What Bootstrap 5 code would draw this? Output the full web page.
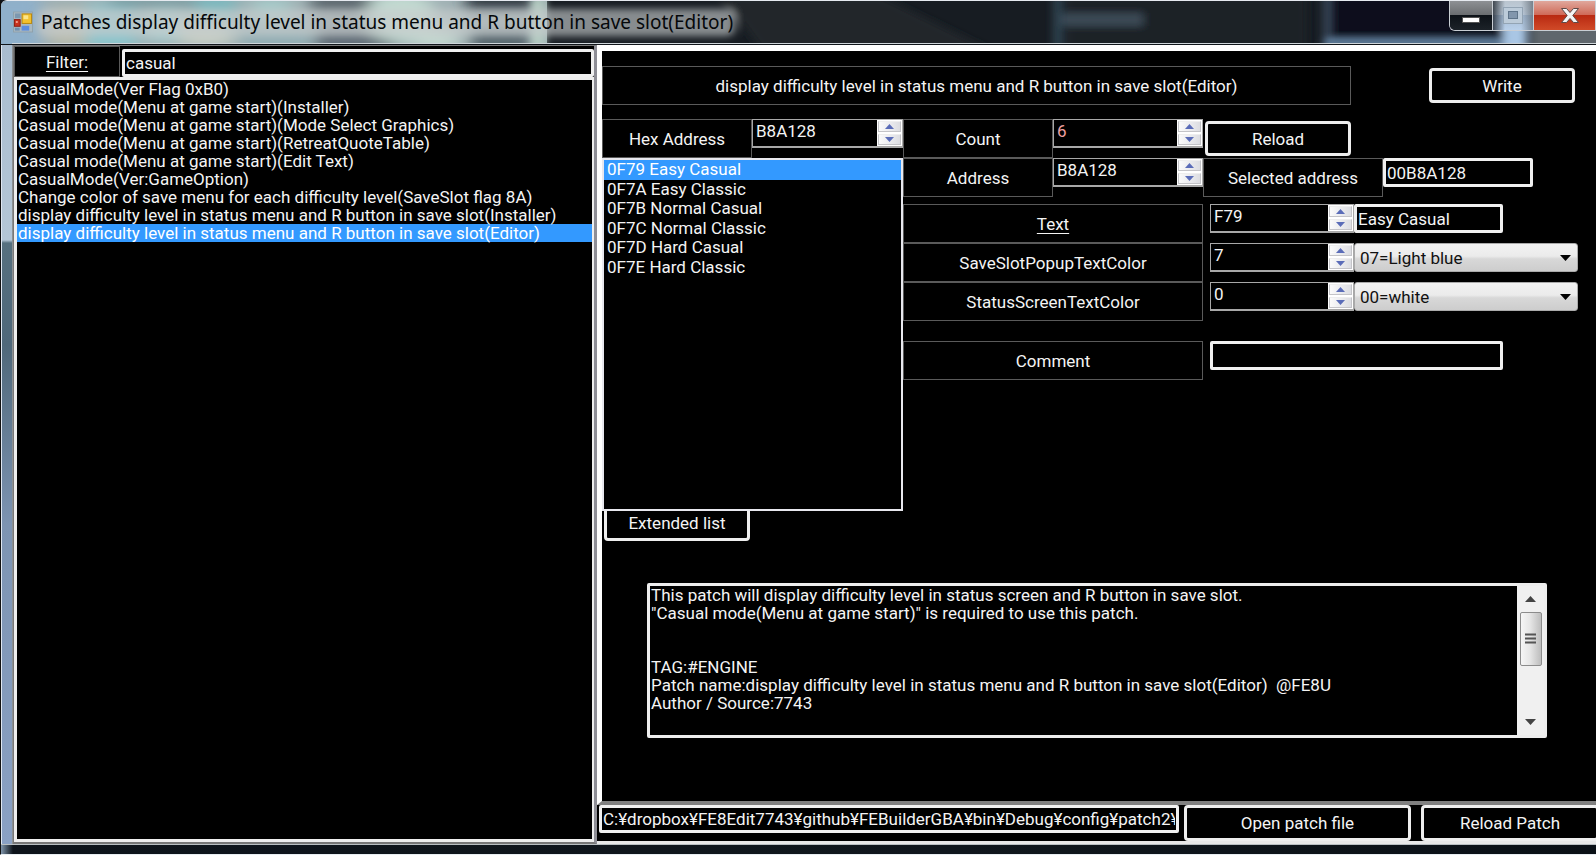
<!DOCTYPE html>
<html lang="en">
<head>
<meta charset="utf-8">
<meta name="viewport" content="width=device-width, initial-scale=1">
<title>Patches display difficulty level in status menu and R button in save slot(Editor)</title>
<link href="https://cdn.jsdelivr.net/npm/bootstrap@5.3.0/dist/css/bootstrap.min.css" rel="stylesheet">
<style>
  :root { --ui: Roboto, "Noto Sans CJK JP", sans-serif; --edge: #5a5a5a; --hl: #3399ff; }
  body { font-family: var(--ui); font-size: 17px; line-height: 18px; color: #f4f4f4; background: #11161c; }
  .win { min-height: 100vh; background: #0c1218; border-left: 1px solid #111; border-bottom: 1px solid #e8eef2; }
  .glass-left { width: 11px; background: linear-gradient(90deg, #dfe7f2 0 1px, transparent 1px), linear-gradient(180deg, #a9bdd0 0, #b4c6d6 195px, #56707f 198px, #4f687a 300px, #7d94b2 480px, #8aa1c4 100%); }
  .flow-min { min-width: 0; }

  /* Glass title bar */
  .titlebar { height: 45px; position: relative; border-top: 1px solid #e6eaf0; border-bottom: 1px solid #10151a; border-top-left-radius: 6px; background: #171c23; }
  .titlebar .backdrop { position: absolute; inset: 0; width: 100%; height: 100%; }
  .titlebar .caption { font-family: "Noto Sans", sans-serif; font-size: 19px; line-height: 26px; color: #05080a; }
  .titlebar::after { content: ""; position: absolute; left: 11px; right: 0; bottom: 0; height: 1px; background: #cfd6da; }
  .sysbtns { position: relative; height: 30px; border: 1px solid #c9ced4; border-top: 0; border-right: 0; border-bottom-left-radius: 6px; overflow: hidden; }
  .sysbtns button { border: 0; padding: 0; height: 29px; border-right: 1px solid #c9ced4; background: linear-gradient(#8d9094 0, #6a6d70 48%, #0d1218 50%, #1c2228 100%); }
  .sysbtns .b-min { width: 43px; }
  .sysbtns .b-max { width: 41px; background: linear-gradient(90deg, rgba(20,26,34,.75) 0, rgba(20,26,34,0) 30%, rgba(20,26,34,0) 70%, rgba(90,100,110,.7) 100%), linear-gradient(#b9c4ce 0, #c3d2e2 48%, #a5bbd4 50%, #b9d0ea 100%); }
  .sysbtns .b-close { width: 62px; padding-left: 10px; background: linear-gradient(#e0a79c 0, #cf6a58 48%, #b92a12 50%, #d04a28 100%); }

  /* Shared controls */
  .client { background: #000; border-left: 1px solid #8b8f92; }
  .cell { border: 1px solid var(--edge); display: flex; align-items: center; justify-content: center; height: 39px; white-space: nowrap; }
  .cell a { color: inherit; text-decoration: underline; text-underline-offset: 3px; }
  .w150 { flex: 0 0 150px; }
  .btn-w { font: inherit; background: #000; color: inherit; border: 3px solid #eee; border-radius: 4px; padding: 0; height: 35px; }
  .txt { font: inherit; background: #000; color: inherit; border: 3px solid #f0f0f0; border-radius: 2px; padding: 0 1px; height: 29px; min-width: 0; }
  .spin { display: flex; min-width: 0; height: 29px; border: 1px solid #a8a8a8; border-bottom-width: 2px; background: #000; }
  .spin input { flex: 1 1 0; width: 0; min-width: 0; border: 0; background: transparent; color: inherit; font: inherit; padding: 0 0 4px 3px; outline: 0; }
  .spin input.pink { color: #f0a0a0; }
  .spin .steps { flex: 0 0 25px; background: #fff; display: flex; flex-direction: column; gap: 2px; padding: 1px; }
  .spin .steps button { flex: 1; border: 1px solid #c4c4c8; border-top-color: #eee; background: linear-gradient(90deg, #fbfbfb, #dcdde2); padding: 0; line-height: 0; display: flex; align-items: center; justify-content: center; }
  .combo { font: inherit; color: #111; border: 1px solid #aaa; border-radius: 3px; height: 29px; padding: 0 5px; appearance: none; width: 224px;
    background: url("data:image/svg+xml,%3Csvg xmlns='http://www.w3.org/2000/svg' width='12' height='6'%3E%3Cpath d='M0 0h11L5.5 6z'/%3E%3C/svg%3E") no-repeat right 5px center, linear-gradient(#f2f2f2, #ebebeb 45%, #d8d8d8 55%, #cdcdcd); }

  /* Left pane */
  .left-pane { flex: 0 0 584px; border: solid #777; border-width: 1px 3px 2px 1px; border-right-color: #8e8e96; }
  .filter-label { width: 106px; height: 31px; }
  .filter-row .txt { height: 28px; margin-left: 2px; }
  .results { border: 3px solid #eee; border-right-width: 2px; margin: 0; }
  .results li { padding-left: 1px; height: 18px; white-space: nowrap; }
  .results li.on, .entries li.on { background: var(--hl); color: #fff; }

  /* Right pane */
  .right-pane { border-left: 5px solid #fff; border-top: 6px solid #fff; border-bottom: 4px solid #808080; min-width: 0; }
  .top-row { padding: 15px 16px 0 0; }
  .write { width: 146px; margin-left: 78px; margin-right: 5px; }
  .editor { margin-top: 14px; }
  .listcol { flex: 0 0 301px; min-width: 0; }
  .entries-box { height: 353px; border: 2px solid #e8e8ee; position: relative; z-index: 1; background: #000; }
  .entries { height: 117px; display: flex; flex-direction: column; }
  .entries li { flex: 1; padding-left: 3px; }
  .ext { width: 146px; height: 36px; margin: -6px 0 0 2px; }
  .reload { width: 146px; margin: 2px 0 2px 2px; }
  .sel-label { width: 180px; }
  .sel-box { width: 150px; }
  .fields { margin-top: 7px; }
  .flab { flex: 0 0 300px; }
  .fields .spin { width: 144px; margin-left: 7px; }
  .preview { width: 149px; }
  .comment { margin-top: 20px; }
  .comment .txt { width: 293px; margin-left: 7px; }

  .memo { height: 155px; border: 3px solid #eee; border-radius: 2px; margin: 42px 49px 0 45px; }
  .memo textarea { font: inherit; color: inherit; background: #000; border: 0; padding: 0 1px; resize: none; overflow: hidden; outline: 0; }
  .vscroll { width: 27px; background: #f0f0f0; }
  .vscroll button { border: 0; background: transparent; padding: 0; height: 26px; line-height: 0; }
  .vscroll .thumb { height: 54px; width: 22px; border: 1px solid #8c8c8c; border-radius: 2px; background: linear-gradient(90deg, #f6f6f6, #e6e6e6 45%, #bdbdbd); display: flex; align-items: center; justify-content: center; }

  /* Footer */
  .footbar { height: 39px; border-bottom: 3px solid #e8e8e8; }
  .footbar .btn-w { height: 36px; }
  .footbar .path { margin-left: 2px; height: 28px; }
  .openf { width: 227px; margin-left: 5px; }
  .reloadp { width: 178px; margin-left: 10px; margin-right: -3px; }
  .frame-bottom { height: 10px; border-top: 1px solid #b9bfc2; background: linear-gradient(90deg, #7f95ab 0, #0d131a 12px, #10171d 60%, #0a1016 100%); }
</style>
</head>
<body>
<div class="win d-flex flex-column overflow-hidden">
  <header class="titlebar d-flex justify-content-between align-items-start overflow-hidden">
    <svg class="backdrop" preserveAspectRatio="none" viewBox="0 0 1595 44" aria-hidden="true">
      <defs>
        <filter id="soft" x="-20%" y="-50%" width="140%" height="200%"><feGaussianBlur stdDeviation="8"/></filter>
        <filter id="fine" x="-20%" y="-50%" width="140%" height="200%"><feGaussianBlur stdDeviation="4"/></filter>
      </defs>
      <rect width="546" height="44" fill="#9fb0b3"/>
      <g filter="url(#soft)">
        <rect x="-20" y="-10" width="60" height="70" fill="#8fb0cb"/>
        <ellipse cx="70" cy="30" rx="26" ry="20" fill="#b9bcae"/>
        <rect x="85" y="4" width="50" height="50" fill="#8cc4cc"/>
        <rect x="110" y="-6" width="100" height="14" fill="#74969c"/>
        <ellipse cx="165" cy="26" rx="26" ry="14" fill="#a8d3d4"/>
        <rect x="195" y="-8" width="40" height="40" fill="#7cb8be"/>
        <ellipse cx="205" cy="34" rx="30" ry="14" fill="#c9d0c6"/>
        <rect x="240" y="24" width="70" height="26" fill="#92aeb4"/>
        <ellipse cx="270" cy="8" rx="22" ry="12" fill="#a6cccb"/>
        <rect x="310" y="-10" width="60" height="24" fill="#59636a"/>
        <rect x="315" y="26" width="80" height="30" fill="#5e6a74"/>
        <ellipse cx="400" cy="16" rx="35" ry="26" fill="#c3dbd2"/>
        <rect x="465" y="-14" width="70" height="24" fill="#29333b"/>
        <ellipse cx="435" cy="38" rx="26" ry="14" fill="#c4d8d0"/>
        <rect x="470" y="30" width="60" height="22" fill="#4c5a62"/>
      </g>
      <rect x="546" width="1050" height="44" fill="#171c22"/>
      <g filter="url(#fine)">
        <rect x="530" y="-4" width="14" height="54" fill="#b5cdc3"/>
        <path d="M720-5h160l110 55H760z" fill="#20262c"/>
        <path d="M1052-5h10v55h-10z" fill="#2e4250"/>
        <rect x="1066" y="-6" width="240" height="56" fill="#1a2028"/>
        <rect x="1062" y="12" width="80" height="14" fill="#3a4a55"/>
        <rect x="1322" y="-6" width="180" height="44" fill="#08101c"/>
        <rect x="1322" y="-6" width="8" height="60" fill="#38475a"/>
        <rect x="1324" y="39" width="190" height="8" fill="#6b8cad"/>
        <rect x="1502" y="-6" width="24" height="60" fill="#a9c6e4"/>
        <rect x="1530" y="-6" width="80" height="60" fill="#5f666c"/>
        <rect x="36" y="8" width="698" height="28" rx="8" fill="#c6cccd" fill-opacity=".64"/>
      </g>
    </svg>
    <div class="d-flex align-items-center gap-2 ps-2 ms-1 pt-2 position-relative">
      <svg width="20" height="22" viewBox="0 0 21 22" aria-hidden="true">
        <rect x=".5" y=".5" width="20" height="21" fill="#a9b9c2" stroke="#8fa1ab"/>
        <rect x="2" y="2" width="6" height="5" fill="#7c98b0"/>
        <rect x="9.5" y="2.5" width="10" height="10" fill="#f2c12e" stroke="#b8860b"/>
        <rect x="11" y="4" width="5" height="4" fill="#fbe58a"/>
        <rect x="1.5" y="8.5" width="6" height="7" fill="#c8321e" stroke="#8d1a10"/>
        <rect x="3" y="10" width="2" height="2" fill="#f0a090"/>
        <rect x="9" y="15" width="8" height="5" fill="#5b8de0"/>
        <rect x="2" y="17" width="5" height="3" fill="#6f8fb0"/>
      </svg>
      <span class="caption text-nowrap">Patches display difficulty level in status menu and R button in save slot(Editor)</span>
    </div>
    <div class="sysbtns d-flex flex-shrink-0">
      <button class="b-min" type="button" aria-label="Minimize"><svg width="18" height="20" viewBox="0 0 18 20"><rect x=".5" y="11.5" width="17" height="5" fill="#fff" stroke="#555"/></svg></button>
      <button class="b-max" type="button" aria-label="Maximize"><svg width="20" height="18" viewBox="0 0 20 18"><rect x=".5" y=".5" width="19" height="16" fill="#bccbd9" stroke="#93a4b4"/><rect x="5.5" y="4.5" width="9" height="7" fill="#8296ac" stroke="#5f7489"/></svg></button>
      <button class="b-close" type="button" aria-label="Close"><svg width="20" height="18" viewBox="0 0 20 18"><path d="M1.5 1.500h5L10 5.500l3.500-4h5L12.800 8.500l5.700 7h-5L10 11.500l-3.500 4h-5l5.700-7z" fill="#f4f4f4" stroke="#5e4a48"/></svg></button>
    </div>
  </header>

  <div class="d-flex flex-grow-1">
    <div class="glass-left flex-shrink-0"></div>
    <main class="client d-flex flex-grow-1 flow-min">
      <section class="left-pane d-flex flex-column">
        <div class="filter-row d-flex align-items-end">
          <div class="cell filter-label"><a href="#filter">Filter:</a></div>
          <input id="filter" class="txt flex-grow-1" value="casual" aria-label="Filter">
        </div>
        <ul class="results list-unstyled flex-grow-1">
          <li>CasualMode(Ver Flag 0xB0)</li>
          <li>Casual mode(Menu at game start)(Installer)</li>
          <li>Casual mode(Menu at game start)(Mode Select Graphics)</li>
          <li>Casual mode(Menu at game start)(RetreatQuoteTable)</li>
          <li>Casual mode(Menu at game start)(Edit Text)</li>
          <li>CasualMode(Ver:GameOption)</li>
          <li>Change color of save menu for each difficulty level(SaveSlot flag 8A)</li>
          <li>display difficulty level in status menu and R button in save slot(Installer)</li>
          <li class="on">display difficulty level in status menu and R button in save slot(Editor)</li>
        </ul>
      </section>

      <div class="d-flex flex-column flex-grow-1 flow-min">
        <section class="right-pane flex-grow-1">
          <div class="top-row d-flex align-items-center">
            <div class="cell flex-grow-1">display difficulty level in status menu and R button in save slot(Editor)</div>
            <button class="btn-w write" type="button">Write</button>
          </div>
          <div class="d-flex editor">
            <div class="listcol">
              <div class="d-flex">
                <label class="cell w150" for="hex">Hex Address</label>
                <div class="spin flex-grow-1"><input id="hex" value="B8A128"><span class="steps"><button type="button" aria-label="Up"><svg width="9" height="5"><path d="M0 5h9L4.5 0z" fill="#5a6cb8"/></svg></button><button type="button" aria-label="Down"><svg width="9" height="5"><path d="M0 0h9L4.5 5z" fill="#5a6cb8"/></svg></button></span></div>
              </div>
              <div class="entries-box">
                <ul class="entries list-unstyled mb-0">
                  <li class="on">0F79 Easy Casual</li>
                  <li>0F7A Easy Classic</li>
                  <li>0F7B Normal Casual</li>
                  <li>0F7C Normal Classic</li>
                  <li>0F7D Hard Casual</li>
                  <li>0F7E Hard Classic</li>
                </ul>
              </div>
              <button class="btn-w ext" type="button">Extended list</button>
            </div>
            <div class="flex-grow-1 flow-min">
              <div class="d-flex">
                <label class="cell w150" for="cnt">Count</label>
                <div class="spin w150"><input id="cnt" class="pink" value="6"><span class="steps"><button type="button" aria-label="Up"><svg width="9" height="5"><path d="M0 5h9L4.5 0z" fill="#5a6cb8"/></svg></button><button type="button" aria-label="Down"><svg width="9" height="5"><path d="M0 0h9L4.5 5z" fill="#5a6cb8"/></svg></button></span></div>
                <button class="btn-w reload" type="button">Reload</button>
              </div>
              <div class="d-flex">
                <label class="cell w150" for="adr">Address</label>
                <div class="spin w150"><input id="adr" value="B8A128"><span class="steps"><button type="button" aria-label="Up"><svg width="9" height="5"><path d="M0 5h9L4.5 0z" fill="#5a6cb8"/></svg></button><button type="button" aria-label="Down"><svg width="9" height="5"><path d="M0 0h9L4.5 5z" fill="#5a6cb8"/></svg></button></span></div>
                <label class="cell sel-label" for="sel">Selected address</label>
                <input id="sel" class="txt sel-box" value="00B8A128">
              </div>
              <div class="fields">
                <div class="d-flex">
                  <div class="cell flab"><a href="#txt">Text</a></div>
                  <div class="spin"><input id="txt" value="F79" aria-label="Text"><span class="steps"><button type="button" aria-label="Up"><svg width="9" height="5"><path d="M0 5h9L4.5 0z" fill="#5a6cb8"/></svg></button><button type="button" aria-label="Down"><svg width="9" height="5"><path d="M0 0h9L4.5 5z" fill="#5a6cb8"/></svg></button></span></div>
                  <input class="txt preview" value="Easy Casual" aria-label="Text preview">
                </div>
                <div class="d-flex">
                  <label class="cell flab" for="ssp">SaveSlotPopupTextColor</label>
                  <div class="spin"><input id="ssp" value="7"><span class="steps"><button type="button" aria-label="Up"><svg width="9" height="5"><path d="M0 5h9L4.5 0z" fill="#5a6cb8"/></svg></button><button type="button" aria-label="Down"><svg width="9" height="5"><path d="M0 0h9L4.5 5z" fill="#5a6cb8"/></svg></button></span></div>
                  <select class="combo" aria-label="Popup colour"><option>07=Light blue</option></select>
                </div>
                <div class="d-flex">
                  <label class="cell flab" for="sst">StatusScreenTextColor</label>
                  <div class="spin"><input id="sst" value="0"><span class="steps"><button type="button" aria-label="Up"><svg width="9" height="5"><path d="M0 5h9L4.5 0z" fill="#5a6cb8"/></svg></button><button type="button" aria-label="Down"><svg width="9" height="5"><path d="M0 0h9L4.5 5z" fill="#5a6cb8"/></svg></button></span></div>
                  <select class="combo" aria-label="Status colour"><option>00=white</option></select>
                </div>
                <div class="d-flex comment">
                  <label class="cell flab" for="cmt">Comment</label>
                  <input id="cmt" class="txt" value="">
                </div>
              </div>
            </div>
          </div>
          <div class="memo d-flex">
            <textarea class="flex-grow-1" aria-label="Patch description" readonly>This patch will display difficulty level in status screen and R button in save slot.
"Casual mode(Menu at game start)" is required to use this patch.


TAG:#ENGINE
Patch name:display difficulty level in status menu and R button in save slot(Editor)  @FE8U
Author / Source:7743</textarea>
            <div class="vscroll d-flex flex-column align-items-center">
              <button type="button" aria-label="Scroll up"><svg width="11" height="6"><path d="M0 6h11L5.5 0z" fill="#444"/></svg></button>
              <div class="thumb"><svg width="11" height="12"><path d="M0 1.5h11M0 5.5h11M0 9.5h11" stroke="#555" stroke-width="2"/></svg></div>
              <button type="button" class="mt-auto" aria-label="Scroll down"><svg width="11" height="6"><path d="M0 0h11L5.5 6z" fill="#444"/></svg></button>
            </div>
          </div>
        </section>
        <div class="footbar d-flex align-items-start">
          <input class="txt path flex-grow-1" aria-label="Patch path" value="C:¥dropbox¥FE8Edit7743¥github¥FEBuilderGBA¥bin¥Debug¥config¥patch2¥FE8U">
          <button class="btn-w openf" type="button">Open patch file</button>
          <button class="btn-w reloadp" type="button">Reload Patch</button>
        </div>
      </div>
    </main>
  </div>
  <div class="frame-bottom"></div>
</div>
<script src="https://cdn.jsdelivr.net/npm/bootstrap@5.3.0/dist/js/bootstrap.bundle.min.js"></script>
</body>
</html>
